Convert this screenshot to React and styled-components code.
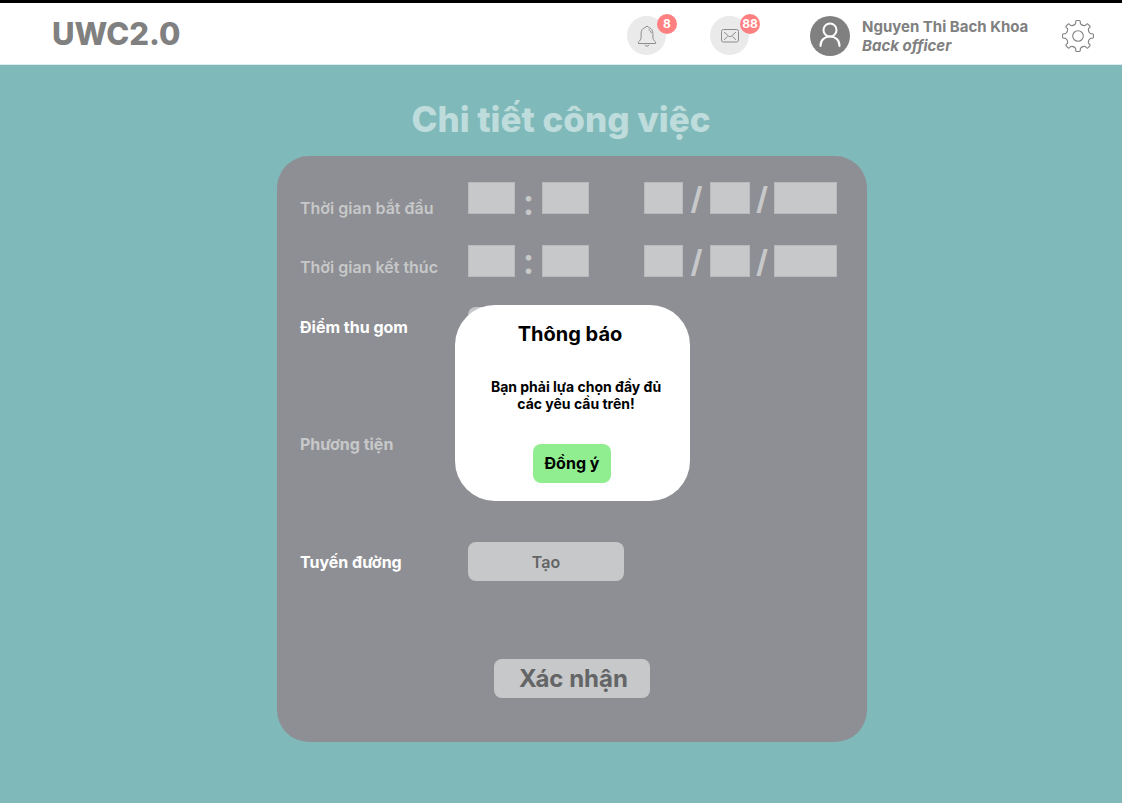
import React from "react";
import styled, { createGlobalStyle } from "styled-components";

const GlobalStyle = createGlobalStyle`
  *, *::before, *::after { box-sizing: border-box; }
  body {
    margin: 0;
    background: #7fb9b9;
    font-family: Inter, "Noto Sans", sans-serif;
  }
  button, input, select { font-family: inherit; }
`;

const Page = styled.div`
  min-height: 100vh;
  border-top: 3px solid #000;
`;

const Header = styled.header`
  display: flex;
  align-items: center;
  height: 62px;
  padding: 4px 28px 0 52px;
  background: #fff;
  border-bottom: 1px solid #dcebeb;
`;

const Brand = styled.a`
  margin: 0 auto 4px 0;
  color: #808080;
  font-size: 31px;
  line-height: 40px;
  font-weight: 800;
  text-decoration: none;
`;

const IconButton = styled.button`
  position: relative;
  display: flex;
  align-items: center;
  justify-content: center;
  width: ${(p) => (p.$plain ? 32 : 39)}px;
  height: ${(p) => (p.$plain ? 32 : 39)}px;
  margin-right: ${(p) => p.$gap || 0}px;
  padding: 0;
  border: 0;
  border-radius: 50%;
  background: ${(p) => (p.$plain ? "transparent" : "#eaeaea")};
`;

const Badge = styled.span`
  position: absolute;
  top: -2px;
  right: -11px;
  width: 20px;
  height: 20px;
  border-radius: 50%;
  background: #ff8080;
  color: #fff;
  font-size: 12px;
  line-height: 20px;
  font-weight: 700;
  text-align: center;
`;

const Avatar = styled.span`
  display: flex;
  width: 40px;
  height: 40px;
  margin-right: 12px;
  border-radius: 50%;
  background: #808080;
`;

const User = styled.div`
  min-width: 171px;
  margin-right: 29px;
  color: #808080;
  font-size: 15px;
  line-height: 19px;
  font-weight: 700;
  white-space: nowrap;
`;

const Role = styled.div`
  font-style: italic;
`;

const Main = styled.main`
  display: flex;
  flex-direction: column;
  align-items: center;
  padding: 32px 16px 60px;
`;

const Title = styled.h1`
  margin: 0 0 15px;
  color: #bfdcdc;
  font-size: 35px;
  line-height: 44px;
  font-weight: 800;
`;

const Card = styled.form`
  display: flex;
  flex-direction: column;
  width: 100%;
  max-width: 590px;
  margin-left: 22px;
  padding: 26px 24px 44px 23px;
  border-radius: 32px;
  background: #8e8f94;
`;

const Row = styled.div`
  display: grid;
  grid-template-columns: 168px 1fr;
  align-items: ${(p) => p.$align || "center"};
  margin-bottom: ${(p) => p.$gap}px;
`;

const Label = styled.label`
  color: ${(p) => (p.$active ? "#fff" : "#c7c8c9")};
  font-size: 16px;
  line-height: 20px;
  font-weight: ${(p) => (p.$strong || p.$active ? 700 : 600)};
`;

const Moment = styled.div`
  display: flex;
  height: ${(p) => p.$height}px;
`;

const Group = styled.div`
  display: flex;
  margin-right: ${(p) => p.$gap || 0}px;
`;

const Digits = styled.input`
  width: ${(p) => p.$width}px;
  height: 32px;
  padding: 0 4px;
  border: 1px solid #b9babc;
  border-radius: 0;
  background: #c7c8c9;
  font-size: 16px;
  text-align: center;
`;

const Colon = styled.span`
  width: 27px;
  align-self: end;
  color: #c7c8c9;
  font-size: 36px;
  line-height: 32px;
  font-weight: 600;
  text-align: center;
`;

const Slash = styled.span`
  width: ${(p) => p.$width}px;
  color: #c7c8c9;
  font-size: 31px;
  line-height: 34px;
  font-weight: 700;
  text-align: center;
`;

const Choice = styled.select`
  width: 156px;
  height: 39px;
  border: 0;
  border-radius: 8px;
  appearance: none;
  background: #c7c8c9;
`;

const Action = styled.button`
  width: 156px;
  height: 39px;
  padding: 0 0 0 ${(p) => (p.$large ? 4 : 0)}px;
  border: 0;
  border-radius: 8px;
  background: #c7c8c9;
  color: #646566;
  font-size: ${(p) => (p.$large ? 24 : 16)}px;
  font-weight: ${(p) => (p.$large ? 700 : 600)};
`;

const Submit = styled.div`
  display: flex;
  justify-content: center;
`;

const Overlay = styled.div`
  position: absolute;
  inset: 0;
  display: flex;
  align-items: center;
  justify-content: center;
  padding: 2px 0 0 22px;
`;

const Dialog = styled.section`
  display: flex;
  flex-direction: column;
  align-items: center;
  width: 235px;
  padding: 17px 16px 18px;
  border-radius: 40px;
  background: #fff;
  color: #000;
  text-align: center;
`;

const DialogTitle = styled.h2`
  margin: 0 4px 32px 0;
  font-size: 20px;
  line-height: 24px;
  font-weight: 700;
`;

const Message = styled.p`
  margin: 0 0 32px;
  padding-left: 8px;
  font-size: 14px;
  line-height: 17px;
  font-weight: 700;
  white-space: nowrap;
`;

const Accept = styled.button`
  width: 78px;
  height: 39px;
  padding: 0;
  border: 0;
  border-radius: 8px;
  background: #90ee90;
  color: #000;
  font-size: 16px;
  font-weight: 700;
`;

const BellIcon = () => (
  <svg width="20" height="22" viewBox="0 0 20 22" fill="none" stroke="#8c8c8c" strokeWidth="1">
    <path d="M8.300 2.500a1.800 1.800 0 0 1 3.400 0c2.800.8 4.200 3 4.200 6v3.300c0 2.400.8 3.700 2.700 5.200v1.500H1.400V17c1.900-1.500 2.700-2.800 2.700-5.200V8.500c0-3 1.400-5.200 4.200-6Z" />
    <path d="M8 19.700a2.100 2.100 0 0 0 4 0M11.500 4.700c1.700.4 2.600 1.600 2.700 3.500" />
  </svg>
);

const MailIcon = () => (
  <svg width="18" height="14" viewBox="0 0 18 14" fill="none" stroke="#8c8c8c" strokeWidth="1">
    <rect x=".5" y=".5" width="17" height="12.500" rx="2" />
    <path d="m3 3 4.700 4.200a2 2 0 0 0 2.600 0L15 3M3 10.800l3.600-3.500M15 10.800l-3.600-3.500" />
  </svg>
);

const PersonIcon = () => (
  <svg width="40" height="40" viewBox="0 0 40 40" fill="none" stroke="#fff" strokeWidth="2" strokeLinecap="round">
    <circle cx="20" cy="14" r="6.500" />
    <path d="M10.500 30c0-5.800 4-9.500 9.500-9.500s9.500 3.700 9.500 9.500" />
  </svg>
);

const TOOTH_ANGLES = [0, 45, 90, 135, 180, 225, 270, 315];

const gearPath = () => {
  const at = (r, deg) => {
    const a = ((deg - 90) * Math.PI) / 180;
    return `${(16 + r * Math.cos(a)).toFixed(2)} ${(16 + r * Math.sin(a)).toFixed(2)}`;
  };
  const teeth = TOOTH_ANGLES.map(
    (t, i) =>
      `${i ? "L" : "M"}${at(12.6, t - 11)}L${at(14.6, t - 9)}Q${at(15.6, t - 8)} ${at(15.5, t - 4)}` +
      `L${at(15.5, t + 4)}Q${at(15.6, t + 8)} ${at(14.6, t + 9)}L${at(12.6, t + 11)}` +
      `Q${at(10.8, t + 22.5)} ${at(12.6, t + 34)}`
  );
  return teeth.join("") + "Z";
};

const GearIcon = () => (
  <svg width="32" height="32" viewBox="0 0 32 32" fill="none" stroke="#808080" strokeWidth="1.100" strokeLinejoin="round">
    <path d={gearPath()} />
    <circle cx="16" cy="16" r="5.300" />
  </svg>
);

const DateTimeRow = ({ id, label, height, gap }) => (
  <Row $align="end" $gap={gap}>
    <Label htmlFor={id}>{label}</Label>
    <Moment $height={height}>
      <Group $gap={55}>
        <Digits id={id} $width={47} />
        <Colon>:</Colon>
        <Digits aria-label={label} $width={47} />
      </Group>
      <Group>
        <Digits aria-label={label} $width={39} />
        <Slash $width={27}>/</Slash>
        <Digits aria-label={label} $width={40} />
        <Slash $width={24}>/</Slash>
        <Digits aria-label={label} $width={63} />
      </Group>
    </Moment>
  </Row>
);

export default function App() {
  return (
    <Page>
      <GlobalStyle />
      <Header>
        <Brand href="#">UWC2.0</Brand>
        <IconButton type="button" $gap={44}>
          <BellIcon />
          <Badge>8</Badge>
        </IconButton>
        <IconButton type="button" $gap={61}>
          <MailIcon />
          <Badge>88</Badge>
        </IconButton>
        <Avatar>
          <PersonIcon />
        </Avatar>
        <User>
          <div>Nguyen Thi Bach Khoa</div>
          <Role>Back officer</Role>
        </User>
        <IconButton type="button" $plain>
          <GearIcon />
        </IconButton>
      </Header>
      <Main>
        <Title>Chi tiết công việc</Title>
        <Card onSubmit={(e) => e.preventDefault()}>
          <DateTimeRow id="start" label="Thời gian bắt đầu" height={36} gap={27} />
          <DateTimeRow id="end" label="Thời gian kết thúc" height={32} gap={30} />
          <Row $gap={78}>
            <Label htmlFor="points" $active>Điểm thu gom</Label>
            <Choice id="points" />
          </Row>
          <Row $gap={79}>
            <Label htmlFor="vehicle" $strong>Phương tiện</Label>
            <Choice id="vehicle" />
          </Row>
          <Row $gap={78}>
            <Label htmlFor="route" $active>Tuyến đường</Label>
            <Action id="route" type="button">Tạo</Action>
          </Row>
          <Submit>
            <Action type="submit" $large>Xác nhận</Action>
          </Submit>
        </Card>
      </Main>
      <Overlay>
        <Dialog role="dialog" aria-labelledby="notice">
          <DialogTitle id="notice">Thông báo</DialogTitle>
          <Message>
            Bạn phải lựa chọn đầy đủ
            <br />
            các yêu cầu trên!
          </Message>
          <Accept type="button">Đồng ý</Accept>
        </Dialog>
      </Overlay>
    </Page>
  );
}
